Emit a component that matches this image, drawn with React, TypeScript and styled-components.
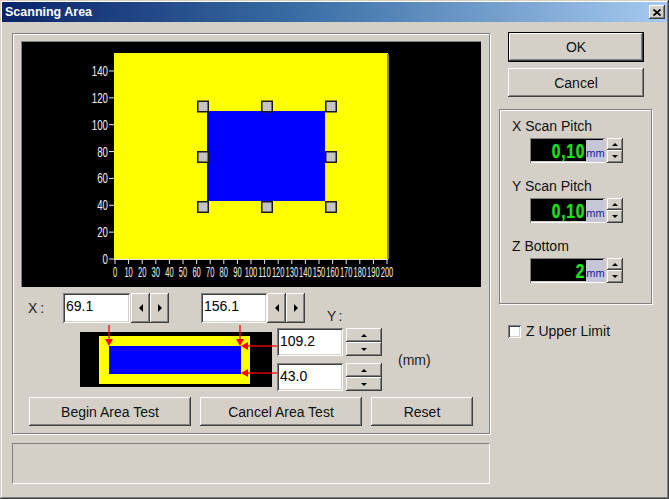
import styled, { createGlobalStyle } from "styled-components";

const GlobalStyle = createGlobalStyle`
  html, body {
    margin: 0;
    padding: 0;
    background: #d4d0c8;
  }
  body {
    font-family: "Liberation Sans", Arial, sans-serif;
    color: #000;
  }
  * {
    box-sizing: border-box;
  }
`;

const raised = `
  background: #d4d0c8;
  box-shadow: inset -1px -1px #404040, inset 1px 1px #ffffff,
    inset -2px -2px #808080, inset 2px 2px #d4d0c8;
`;

const sunken = `
  box-shadow: inset 1px 1px #808080, inset -1px -1px #ffffff,
    inset 2px 2px #404040, inset -2px -2px #d4d0c8;
`;

const Window = styled.div`
  width: 669px;
  height: 499px;
  padding: 2px;
  background: #d4d0c8;
  box-shadow: inset -1px -1px #404040, inset 1px 1px #d4d0c8,
    inset -2px -2px #808080, inset 2px 2px #ffffff;
  display: flex;
  flex-direction: column;
  overflow: hidden;
`;

const TitleBar = styled.div`
  height: 20px;
  display: flex;
  align-items: center;
  justify-content: space-between;
  padding: 0 2px 0 3px;
  background: linear-gradient(to right, #0a246a 0%, #3a6ea5 45%, #a6caf0 100%);
  color: #fff;
  font-weight: bold;
  font-size: 12.5px;
`;

const CloseButton = styled.div`
  ${raised}
  width: 16px;
  height: 14px;
  display: flex;
  align-items: center;
  justify-content: center;
`;

const Body = styled.div`
  display: flex;
  gap: 9px;
  padding: 10px 0 0 10px;
`;

const LeftColumn = styled.div`
  width: 478px;
  padding-top: 1px;
  display: flex;
  flex-direction: column;
`;

const GroupBox = styled.div<{ $h: number }>`
  height: ${(p) => p.$h}px;
  border: 1px solid #808080;
  box-shadow: 1px 1px 0 #ffffff, inset 1px 1px 0 #ffffff;
`;

const MainGroup = styled(GroupBox)`
  padding: 7px 8px 0 8px;
  display: flex;
  flex-direction: column;
`;

const ChartPanel = styled.div`
  width: 460px;
  height: 246px;
  background: #000;
  box-shadow: inset 1px 1px #808080;
`;

const Row = styled.div<{ $mt: number; $ml?: number; $gap?: number }>`
  display: flex;
  align-items: flex-start;
  margin-top: ${(p) => p.$mt}px;
  margin-left: ${(p) => p.$ml ?? 0}px;
  gap: ${(p) => p.$gap ?? 0}px;
`;

const AxisLabel = styled.span<{ $w: number; $ml: number; $mt: number }>`
  width: ${(p) => p.$w}px;
  margin-left: ${(p) => p.$ml}px;
  margin-top: ${(p) => p.$mt}px;
  font-size: 14px;
  line-height: 16px;
  letter-spacing: 3px;
  color: #222;
`;

const TextBox = styled.div<{ $w: number; $h: number; $ml?: number }>`
  ${sunken}
  background: #fff;
  width: ${(p) => p.$w}px;
  height: ${(p) => p.$h}px;
  margin-left: ${(p) => p.$ml ?? 0}px;
  padding: 5px 0 0 3px;
  font-size: 14px;
  line-height: 16px;
`;

const HSpin = styled.div<{ $ml: number }>`
  display: flex;
  margin-left: ${(p) => p.$ml}px;
`;

const ArrowButton = styled.div<{ $w: number; $h: number }>`
  ${raised}
  width: ${(p) => p.$w}px;
  height: ${(p) => p.$h}px;
  display: flex;
  align-items: center;
  justify-content: center;
`;

const Tri = styled.span<{ $dir: "left" | "right" | "up" | "down"; $s: number }>`
  width: 0;
  height: 0;
  ${({ $dir, $s }) =>
    $dir === "left"
      ? `border-top:${$s}px solid transparent;border-bottom:${$s}px solid transparent;border-right:${$s}px solid #000;`
      : $dir === "right"
      ? `border-top:${$s}px solid transparent;border-bottom:${$s}px solid transparent;border-left:${$s}px solid #000;`
      : $dir === "up"
      ? `border-left:${$s}px solid transparent;border-right:${$s}px solid transparent;border-bottom:${$s}px solid #000;`
      : `border-left:${$s}px solid transparent;border-right:${$s}px solid transparent;border-top:${$s}px solid #000;`}
`;

const PreviewBox = styled.div`
  margin-left: 59px;
  width: 197px;
  height: 60px;
  svg {
    overflow: visible;
    display: block;
  }
`;

const YColumn = styled.div`
  display: flex;
  flex-direction: column;
  gap: 7px;
`;

const YRow = styled.div`
  display: flex;
  gap: 3px;
`;

const VSpin = styled.div`
  display: flex;
  flex-direction: column;
`;

const UnitLabel = styled.span`
  align-self: center;
  margin-left: 16px;
  font-size: 14px;
  color: #222;
`;

const PushButton = styled.div<{ $w: number; $h: number; $default?: boolean }>`
  ${raised}
  width: ${(p) => p.$w}px;
  height: ${(p) => p.$h}px;
  display: flex;
  align-items: center;
  justify-content: center;
  font-size: 14px;
  color: #111;
  ${(p) =>
    p.$default &&
    `box-shadow: inset 0 0 0 1px #000, inset -2px -2px #404040, inset 2px 2px #ffffff,
      inset -3px -3px #808080;`}
`;

const StatusPanel = styled.div`
  margin-top: 9px;
  height: 41px;
  border-top: 1px solid #808080;
  border-left: 1px solid #808080;
  border-bottom: 1px solid #ffffff;
  border-right: 1px solid #ffffff;
`;

const RightColumn = styled.div`
  width: 153px;
  display: flex;
  flex-direction: column;
`;

const DialogButton = styled(PushButton)<{ $mt: number }>`
  margin-left: 9px;
  margin-top: ${(p) => p.$mt}px;
`;

const PitchGroup = styled(GroupBox)`
  margin-top: 12px;
  padding: 8px 0 0 12px;
`;

const PitchBlock = styled.div<{ $mt: number }>`
  margin-top: ${(p) => p.$mt}px;
`;

const PitchLabel = styled.div`
  font-size: 14px;
  line-height: 16px;
  color: #111;
`;

const LcdRow = styled.div`
  display: flex;
  margin: 4px 0 0 18px;
  height: 25px;
`;

const LcdFrame = styled.div`
  display: flex;
  width: 75px;
  height: 25px;
  padding: 2px 0 1px 2px;
  background: #000;
  box-shadow: inset 1px 1px #808080, inset -1px -1px #ffffff, inset -2px -2px #d4d0c8;
`;

const LcdValue = styled.div`
  flex: 1;
  text-align: right;
  font-size: 20px;
  font-weight: bold;
  line-height: 22px;
  letter-spacing: 1px;
  color: #1ee01e;
  text-shadow: 0 0 1px #0a8a0a;
  transform: scaleX(0.78);
  transform-origin: right center;
  padding-right: 1px;
`;

const LcdUnit = styled.div`
  width: 19px;
  background: #c6c6d6;
  color: #1a1a9a;
  font-size: 11px;
  line-height: 11px;
  display: flex;
  align-items: flex-end;
  justify-content: center;
  padding-bottom: 3px;
`;

const LcdSpin = styled.div`
  margin-left: 2px;
  display: flex;
  flex-direction: column;
`;

const CheckRow = styled.div`
  margin: 19px 0 0 9px;
  display: flex;
  align-items: center;
  gap: 5px;
  font-size: 14px;
  color: #111;
`;

const CheckBox = styled.div`
  ${sunken}
  width: 13px;
  height: 13px;
  background: #fff;
`;

const xTicks = Array.from({ length: 21 }, (_, i) => i * 10);
const yTicks = Array.from({ length: 8 }, (_, i) => i * 20);
const px = (v: number) => 94 + v * 1.36;
const py = (v: number) => 218 - v * 1.343;

// grab handles around the selected area (top-left corners)
const handles: [number, number][] = [
  [176, 59.5],
  [240, 59.5],
  [304, 59.5],
  [176, 110],
  [304, 110],
  [176, 160],
  [240, 160],
  [304, 160],
];

const ScanChart = () => (
  <svg width="460" height="246" viewBox="0 0 460 246">
    <rect x="93" y="12" width="274" height="206" fill="#ffff00" />
    <rect x="366" y="13" width="2" height="205" fill="#8c8c00" />
    <rect x="186" y="70" width="118" height="90" fill="#0000ff" />
    {handles.map(([x, y], i) => (
      <rect
        key={i}
        x={x + 0.75}
        y={y + 0.75}
        width="10.5"
        height="10.5"
        fill="#c4c4c4"
        stroke="#1a1a1a"
        strokeWidth="1.5"
      />
    ))}
    <g stroke="#e8e8e8" strokeWidth="1">
      <line x1="93" y1="218.5" x2="367" y2="218.5" />
      {xTicks.map((v) => (
        <line key={v} x1={px(v)} y1="218" x2={px(v)} y2="223" />
      ))}
      {yTicks.map((v) => (
        <line key={v} x1="88" y1={py(v)} x2="93" y2={py(v)} />
      ))}
    </g>
    <g fill="#f0f0f0" fontFamily="Liberation Sans, Arial, sans-serif" fontSize="14.5">
      {xTicks.map((v) => {
        const t = String(v);
        return (
          <text
            key={v}
            x={px(v) - (t.length * 4.2) / 2}
            y="236"
            textLength={t.length * 4.2}
            lengthAdjust="spacingAndGlyphs"
          >
            {t}
          </text>
        );
      })}
      {yTicks.map((v) => {
        const t = String(v);
        return (
          <text
            key={v}
            x={87 - t.length * 5.4}
            y={py(v) + 5}
            textLength={t.length * 5.4}
            lengthAdjust="spacingAndGlyphs"
          >
            {t}
          </text>
        );
      })}
    </g>
  </svg>
);

const AreaPreview = () => (
  <svg width="197" height="60" viewBox="0 0 197 60">
    <rect x="0" y="4" width="192" height="55" fill="#000" />
    <rect x="19" y="8" width="151" height="48" fill="#ffff00" />
    <rect x="29" y="18" width="132" height="28" fill="#0000ff" />
    <g stroke="#ff0000" strokeWidth="1.3">
      <line x1="29" y1="-3" x2="29" y2="13" />
      <line x1="160" y1="-3" x2="160" y2="13" />
      <line x1="166" y1="18" x2="197" y2="18" />
      <line x1="166" y1="45" x2="197" y2="45" />
    </g>
    <g fill="#ff0000">
      <polygon points="25,11 33,11 29,18" />
      <polygon points="156,11 164,11 160,18" />
      <polygon points="161,18 168,14 168,22" />
      <polygon points="161,45 168,41 168,49" />
    </g>
  </svg>
);

const SpinPairH = ({ ml }: { ml: number }) => (
  <HSpin $ml={ml}>
    <ArrowButton $w={19} $h={30}>
      <Tri $dir="left" $s={4} />
    </ArrowButton>
    <ArrowButton $w={19} $h={30}>
      <Tri $dir="right" $s={4} />
    </ArrowButton>
  </HSpin>
);

const SpinPairV = ({ w, h1, h2, s }: { w: number; h1: number; h2: number; s: number }) => (
  <>
    <ArrowButton $w={w} $h={h1}>
      <Tri $dir="up" $s={s} />
    </ArrowButton>
    <ArrowButton $w={w} $h={h2}>
      <Tri $dir="down" $s={s} />
    </ArrowButton>
  </>
);

const pitches = [
  { label: "X Scan Pitch", value: "0,10" },
  { label: "Y Scan Pitch", value: "0,10" },
  { label: "Z Bottom", value: "2" },
];

const App = () => {
  return (
    <Window>
      <GlobalStyle />
      <TitleBar>
        <span>Scanning Area</span>
        <CloseButton>
          <svg width="8" height="7" viewBox="0 0 8 7">
            <path d="M0.5 0.5 L7.5 6.5 M7.5 0.5 L0.5 6.5" stroke="#000" strokeWidth="1.8" />
          </svg>
        </CloseButton>
      </TitleBar>
      <Body>
        <LeftColumn>
          <MainGroup $h={401}>
            <ChartPanel>
              <ScanChart />
            </ChartPanel>
            <Row $mt={6}>
              <AxisLabel $w={35} $ml={7} $mt={7}>
                X:
              </AxisLabel>
              <TextBox $w={67} $h={30}>69.1</TextBox>
              <SpinPairH ml={1} />
              <TextBox $w={66} $h={30} $ml={32}>
                156.1
              </TextBox>
              <SpinPairH ml={0} />
              <AxisLabel $w={30} $ml={22} $mt={15}>
                Y:
              </AxisLabel>
            </Row>
            <Row $mt={4}>
              <PreviewBox>
                <AreaPreview />
              </PreviewBox>
              <YColumn>
                <YRow>
                  <TextBox $w={66} $h={28}>109.2</TextBox>
                  <VSpin>
                    <SpinPairV w={36} h1={14} h2={14} s={3} />
                  </VSpin>
                </YRow>
                <YRow>
                  <TextBox $w={66} $h={28}>43.0</TextBox>
                  <VSpin>
                    <SpinPairV w={36} h1={14} h2={14} s={3} />
                  </VSpin>
                </YRow>
              </YColumn>
              <UnitLabel>(mm)</UnitLabel>
            </Row>
            <Row $mt={6} $ml={8} $gap={9}>
              <PushButton $w={162} $h={29}>Begin Area Test</PushButton>
              <PushButton $w={162} $h={29}>Cancel Area Test</PushButton>
              <PushButton $w={102} $h={29}>Reset</PushButton>
            </Row>
          </MainGroup>
          <StatusPanel />
        </LeftColumn>
        <RightColumn>
          <DialogButton $w={136} $h={30} $mt={0} $default>
            OK
          </DialogButton>
          <DialogButton $w={136} $h={29} $mt={6}>
            Cancel
          </DialogButton>
          <PitchGroup $h={195}>
            {pitches.map((p, i) => (
              <PitchBlock key={p.label} $mt={i === 0 ? 0 : 15}>
                <PitchLabel>{p.label}</PitchLabel>
                <LcdRow>
                  <LcdFrame>
                    <LcdValue>{p.value}</LcdValue>
                    <LcdUnit>mm</LcdUnit>
                  </LcdFrame>
                  <LcdSpin>
                    <SpinPairV w={16} h1={12} h2={13} s={3} />
                  </LcdSpin>
                </LcdRow>
              </PitchBlock>
            ))}
          </PitchGroup>
          <CheckRow>
            <CheckBox />
            <span>Z Upper Limit</span>
          </CheckRow>
        </RightColumn>
      </Body>
    </Window>
  );
};

export default App;
